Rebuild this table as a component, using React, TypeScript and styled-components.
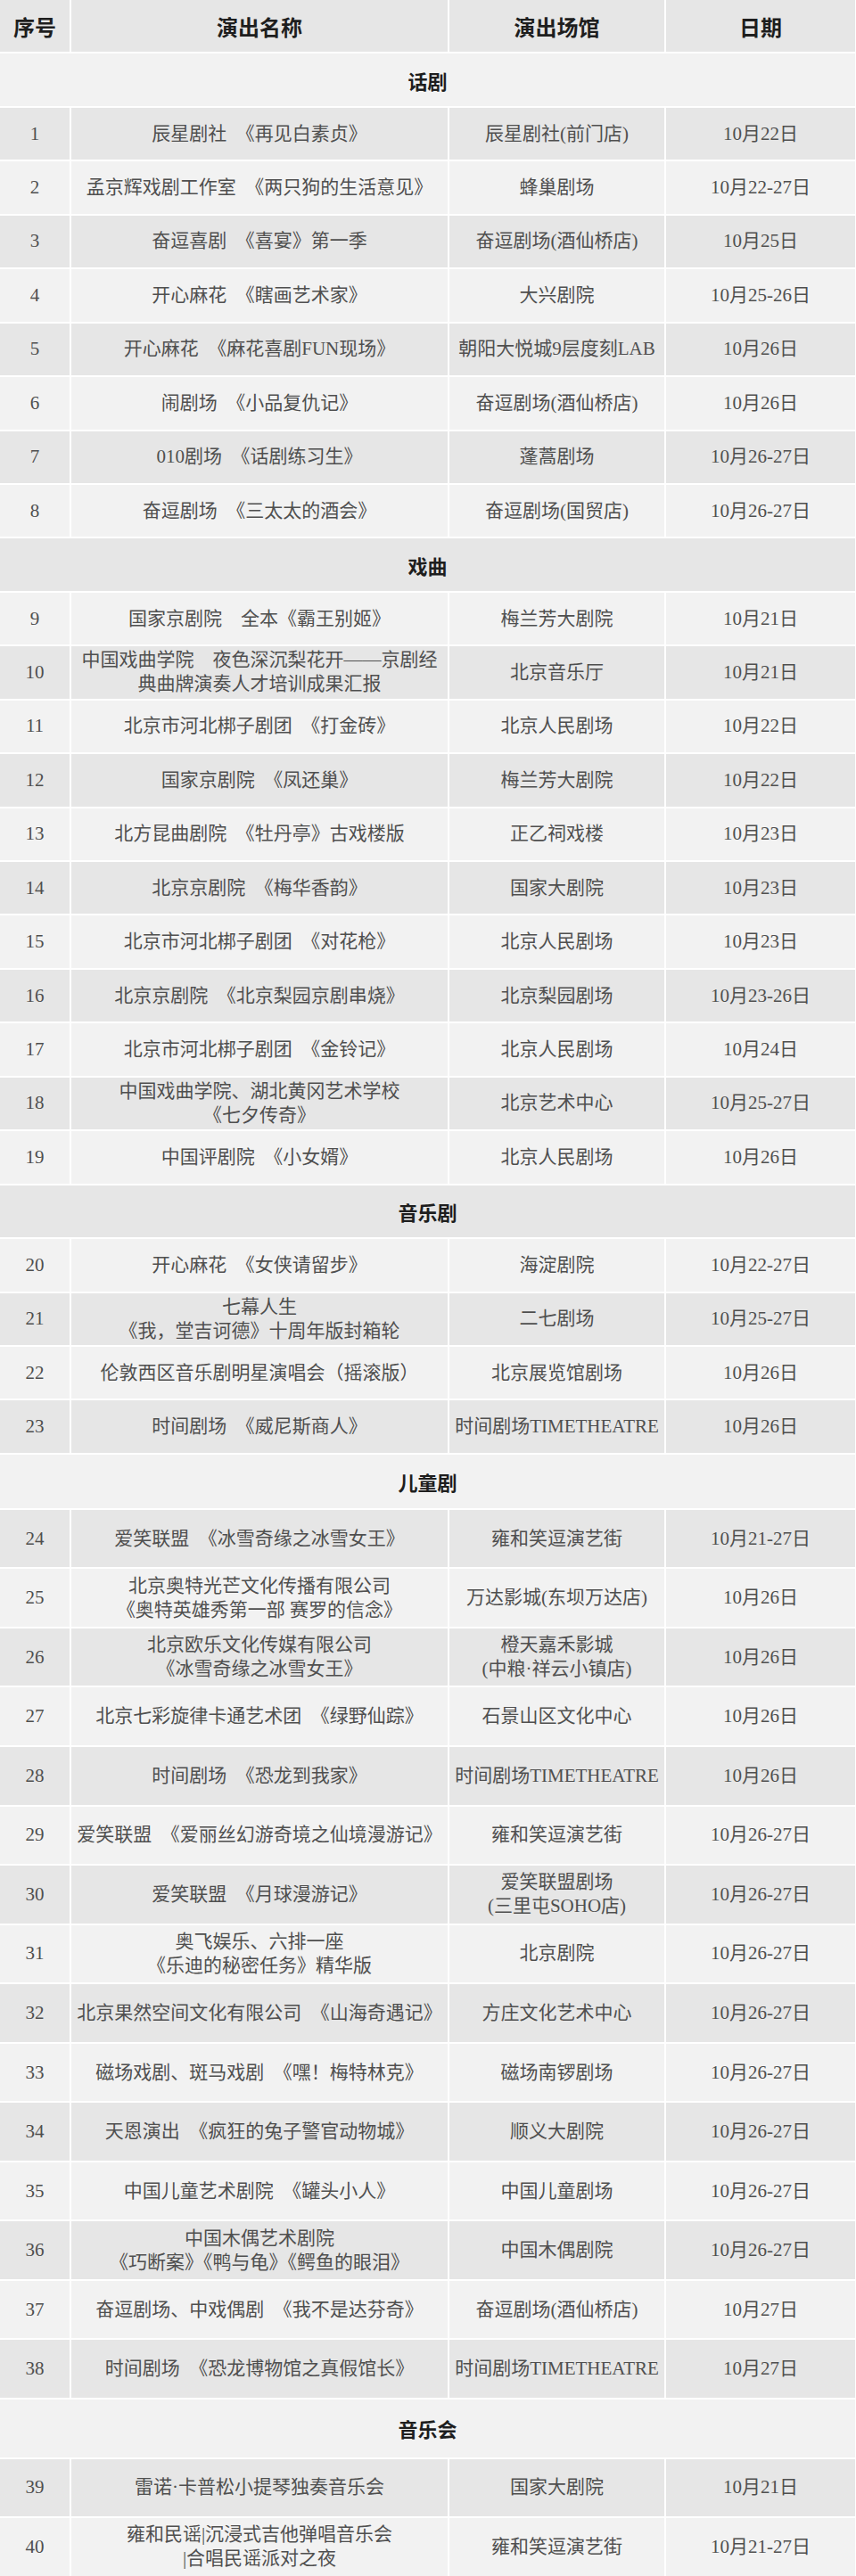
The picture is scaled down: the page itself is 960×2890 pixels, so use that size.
import React from 'react'
import styled, { createGlobalStyle } from 'styled-components'

type Shade = 'dark' | 'light'

interface Show {
  no: number
  title: string[]
  venue: string[]
  date: string
}

interface Section {
  name: string
  headHeight: number
  rowHeight: number
  shows: Show[]
}

const GlobalStyle = createGlobalStyle`
  html, body {
    margin: 0;
    padding: 0;
    background: #ffffff;
  }
  body {
    font-family: "Liberation Serif", "Noto Sans CJK SC", serif;
  }
`

const Table = styled.div`
  display: flex;
  flex-direction: column;
  gap: 2px;
  width: 959px;
  background: #ffffff;
`

const Row = styled.div<{ $height: number }>`
  display: grid;
  grid-template-columns: 78px 422px 241px 212px;
  column-gap: 2px;
  height: ${(p) => p.$height}px;
`

const Cell = styled.div<{ $shade: Shade }>`
  display: flex;
  flex-direction: column;
  align-items: center;
  justify-content: center;
  text-align: center;
  background: ${(p) => (p.$shade === 'dark' ? '#e6e6e6' : '#f2f2f2')};
  color: #4f4f4f;
  font-size: 21px;
  line-height: 27px;
  white-space: nowrap;
`

const HeadCell = styled(Cell)`
  color: #1e1e1e;
  font-family: "Noto Sans CJK SC", sans-serif;
  font-weight: 700;
  font-size: 24px;
`

const SectionRow = styled.div<{ $height: number; $shade: Shade }>`
  display: flex;
  align-items: center;
  justify-content: center;
  height: ${(p) => p.$height}px;
  background: ${(p) => (p.$shade === 'dark' ? '#e6e6e6' : '#f2f2f2')};
  color: #1e1e1e;
  font-family: "Noto Sans CJK SC", sans-serif;
  font-weight: 700;
  font-size: 22px;
`

const Line = styled.span`
  display: block;
`

const BASE = 58.44
const TALL = 64.56

const sections: Section[] = [
  {
    name: '话剧',
    headHeight: BASE,
    rowHeight: BASE,
    shows: [
      { no: 1, title: ['辰星剧社　《再见白素贞》'], venue: ['辰星剧社(前门店)'], date: '10月22日' },
      { no: 2, title: ['孟京辉戏剧工作室　《两只狗的生活意见》'], venue: ['蜂巢剧场'], date: '10月22-27日' },
      { no: 3, title: ['奋逗喜剧　《喜宴》第一季'], venue: ['奋逗剧场(酒仙桥店)'], date: '10月25日' },
      { no: 4, title: ['开心麻花　《瞎画艺术家》'], venue: ['大兴剧院'], date: '10月25-26日' },
      { no: 5, title: ['开心麻花　《麻花喜剧FUN现场》'], venue: ['朝阳大悦城9层度刻LAB'], date: '10月26日' },
      { no: 6, title: ['闹剧场　《小品复仇记》'], venue: ['奋逗剧场(酒仙桥店)'], date: '10月26日' },
      { no: 7, title: ['010剧场　《话剧练习生》'], venue: ['蓬蒿剧场'], date: '10月26-27日' },
      { no: 8, title: ['奋逗剧场　《三太太的酒会》'], venue: ['奋逗剧场(国贸店)'], date: '10月26-27日' },
    ],
  },
  {
    name: '戏曲',
    headHeight: BASE,
    rowHeight: BASE,
    shows: [
      { no: 9, title: ['国家京剧院　全本《霸王别姬》'], venue: ['梅兰芳大剧院'], date: '10月21日' },
      {
        no: 10,
        title: ['中国戏曲学院　夜色深沉梨花开——京剧经', '典曲牌演奏人才培训成果汇报'],
        venue: ['北京音乐厅'],
        date: '10月21日',
      },
      { no: 11, title: ['北京市河北梆子剧团　《打金砖》'], venue: ['北京人民剧场'], date: '10月22日' },
      { no: 12, title: ['国家京剧院　《凤还巢》'], venue: ['梅兰芳大剧院'], date: '10月22日' },
      { no: 13, title: ['北方昆曲剧院　《牡丹亭》古戏楼版'], venue: ['正乙祠戏楼'], date: '10月23日' },
      { no: 14, title: ['北京京剧院　《梅华香韵》'], venue: ['国家大剧院'], date: '10月23日' },
      { no: 15, title: ['北京市河北梆子剧团　《对花枪》'], venue: ['北京人民剧场'], date: '10月23日' },
      { no: 16, title: ['北京京剧院　《北京梨园京剧串烧》'], venue: ['北京梨园剧场'], date: '10月23-26日' },
      { no: 17, title: ['北京市河北梆子剧团　《金铃记》'], venue: ['北京人民剧场'], date: '10月24日' },
      {
        no: 18,
        title: ['中国戏曲学院、湖北黄冈艺术学校', '《七夕传奇》'],
        venue: ['北京艺术中心'],
        date: '10月25-27日',
      },
      { no: 19, title: ['中国评剧院　《小女婿》'], venue: ['北京人民剧场'], date: '10月26日' },
    ],
  },
  {
    name: '音乐剧',
    headHeight: BASE,
    rowHeight: BASE,
    shows: [
      { no: 20, title: ['开心麻花　《女侠请留步》'], venue: ['海淀剧院'], date: '10月22-27日' },
      { no: 21, title: ['七幕人生', '《我，堂吉诃德》十周年版封箱轮'], venue: ['二七剧场'], date: '10月25-27日' },
      { no: 22, title: ['伦敦西区音乐剧明星演唱会（摇滚版）'], venue: ['北京展览馆剧场'], date: '10月26日' },
      { no: 23, title: ['时间剧场　《威尼斯商人》'], venue: ['时间剧场TIMETHEATRE'], date: '10月26日' },
    ],
  },
  {
    name: '儿童剧',
    headHeight: 60,
    rowHeight: TALL,
    shows: [
      { no: 24, title: ['爱笑联盟　《冰雪奇缘之冰雪女王》'], venue: ['雍和笑逗演艺街'], date: '10月21-27日' },
      {
        no: 25,
        title: ['北京奥特光芒文化传播有限公司', '《奥特英雄秀第一部 赛罗的信念》'],
        venue: ['万达影城(东坝万达店)'],
        date: '10月26日',
      },
      {
        no: 26,
        title: ['北京欧乐文化传媒有限公司', '《冰雪奇缘之冰雪女王》'],
        venue: ['橙天嘉禾影城', '(中粮·祥云小镇店)'],
        date: '10月26日',
      },
      { no: 27, title: ['北京七彩旋律卡通艺术团　《绿野仙踪》'], venue: ['石景山区文化中心'], date: '10月26日' },
      { no: 28, title: ['时间剧场　《恐龙到我家》'], venue: ['时间剧场TIMETHEATRE'], date: '10月26日' },
      { no: 29, title: ['爱笑联盟　《爱丽丝幻游奇境之仙境漫游记》'], venue: ['雍和笑逗演艺街'], date: '10月26-27日' },
      {
        no: 30,
        title: ['爱笑联盟　《月球漫游记》'],
        venue: ['爱笑联盟剧场', '(三里屯SOHO店)'],
        date: '10月26-27日',
      },
      {
        no: 31,
        title: ['奥飞娱乐、六排一座', '《乐迪的秘密任务》精华版'],
        venue: ['北京剧院'],
        date: '10月26-27日',
      },
      { no: 32, title: ['北京果然空间文化有限公司　《山海奇遇记》'], venue: ['方庄文化艺术中心'], date: '10月26-27日' },
      { no: 33, title: ['磁场戏剧、斑马戏剧　《嘿！梅特林克》'], venue: ['磁场南锣剧场'], date: '10月26-27日' },
      { no: 34, title: ['天恩演出　《疯狂的兔子警官动物城》'], venue: ['顺义大剧院'], date: '10月26-27日' },
      { no: 35, title: ['中国儿童艺术剧院　《罐头小人》'], venue: ['中国儿童剧场'], date: '10月26-27日' },
      {
        no: 36,
        title: ['中国木偶艺术剧院', '《巧断案》《鸭与龟》《鳄鱼的眼泪》'],
        venue: ['中国木偶剧院'],
        date: '10月26-27日',
      },
      { no: 37, title: ['奋逗剧场、中戏偶剧　《我不是达芬奇》'], venue: ['奋逗剧场(酒仙桥店)'], date: '10月27日' },
      { no: 38, title: ['时间剧场　《恐龙博物馆之真假馆长》'], venue: ['时间剧场TIMETHEATRE'], date: '10月27日' },
    ],
  },
  {
    name: '音乐会',
    headHeight: TALL,
    rowHeight: TALL,
    shows: [
      { no: 39, title: ['雷诺·卡普松小提琴独奏音乐会'], venue: ['国家大剧院'], date: '10月21日' },
      {
        no: 40,
        title: ['雍和民谣|沉浸式吉他弹唱音乐会', '|合唱民谣派对之夜'],
        venue: ['雍和笑逗演艺街'],
        date: '10月21-27日',
      },
    ],
  },
]

function Lines({ items }: { items: string[] }) {
  return (
    <>
      {items.map((t, i) => (
        <Line key={i}>{t}</Line>
      ))}
    </>
  )
}

export default function App() {
  // shading alternates over every row of the table, header included
  let index = 0
  const nextShade = (): Shade => (index++ % 2 === 0 ? 'dark' : 'light')

  const headShade = nextShade()
  const body: React.ReactNode[] = []

  sections.forEach((section) => {
    body.push(
      <SectionRow key={section.name} $height={section.headHeight} $shade={nextShade()}>
        {section.name}
      </SectionRow>
    )
    section.shows.forEach((show) => {
      const shade = nextShade()
      body.push(
        <Row key={show.no} $height={section.rowHeight}>
          <Cell $shade={shade}>{show.no}</Cell>
          <Cell $shade={shade}>
            <Lines items={show.title} />
          </Cell>
          <Cell $shade={shade}>
            <Lines items={show.venue} />
          </Cell>
          <Cell $shade={shade}>{show.date}</Cell>
        </Row>
      )
    })
  })

  return (
    <>
      <GlobalStyle />
      <Table>
        <Row $height={BASE}>
          <HeadCell $shade={headShade}>序号</HeadCell>
          <HeadCell $shade={headShade}>演出名称</HeadCell>
          <HeadCell $shade={headShade}>演出场馆</HeadCell>
          <HeadCell $shade={headShade}>日期</HeadCell>
        </Row>
        {body}
      </Table>
    </>
  )
}
